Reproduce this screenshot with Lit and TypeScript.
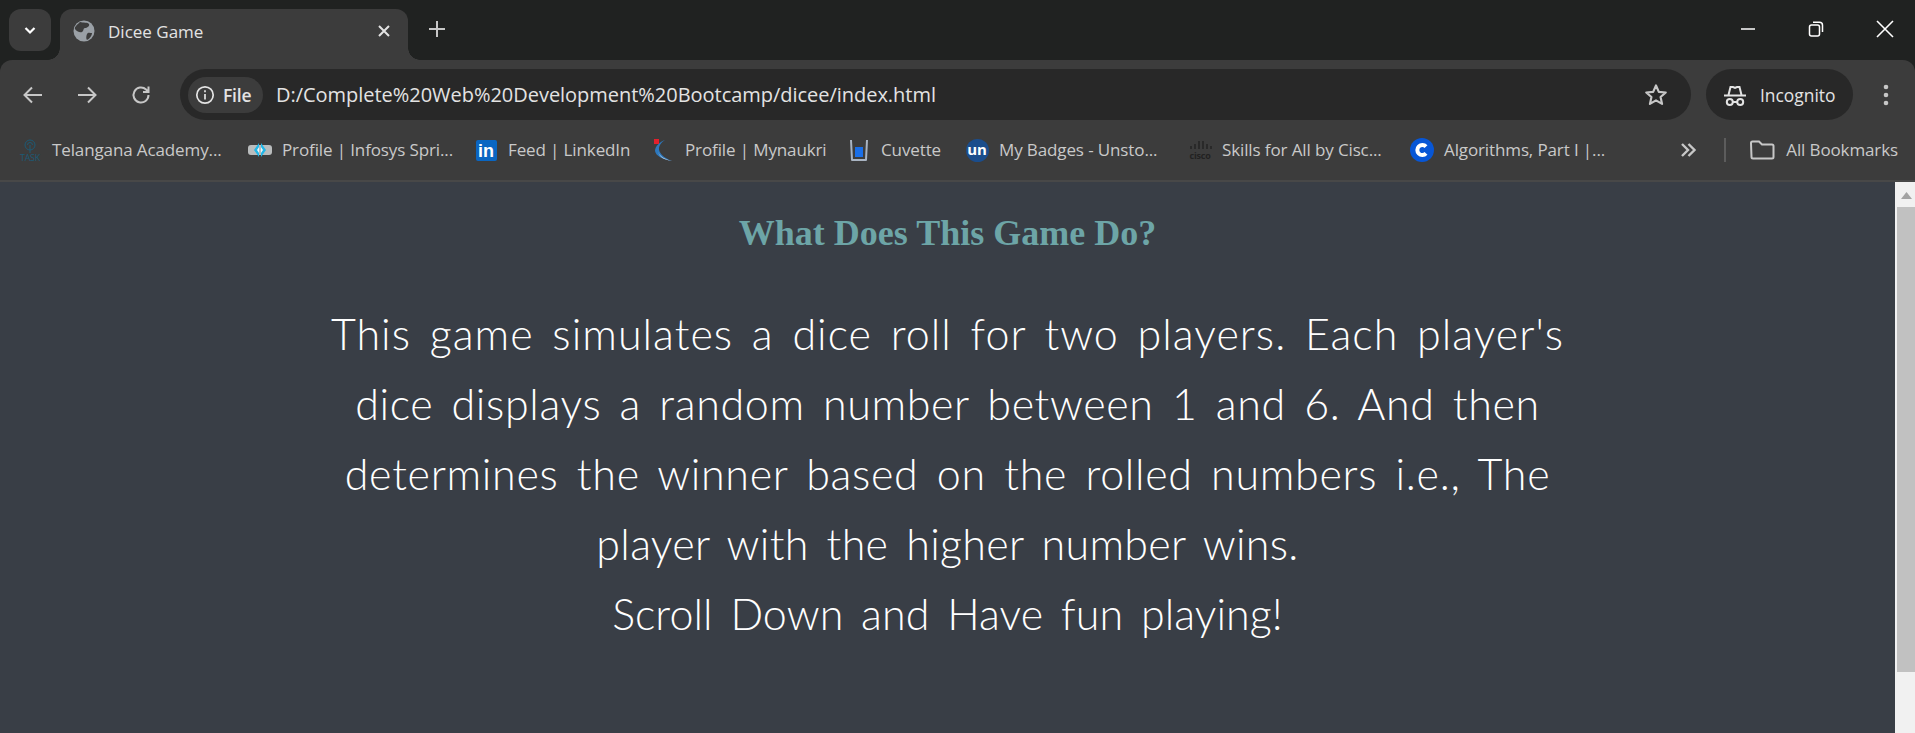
import { LitElement, css, html, svg } from 'lit';
import { customElement } from 'lit/decorators.js';

const BOOKMARKS = [
    { label: 'Telangana Academy...', slot: 248, icon: 'task' },
    { label: 'Profile | Infosys Spri...', slot: 226, icon: 'infosys' },
    { label: 'Feed | LinkedIn', slot: 177, icon: 'linkedin' },
    { label: 'Profile | Mynaukri', slot: 196, icon: 'naukri' },
    { label: 'Cuvette', slot: 118, icon: 'cuvette' },
    { label: 'My Badges - Unsto...', slot: 223, icon: 'un' },
    { label: 'Skills for All by Cisc...', slot: 222, icon: 'cisco' },
    { label: 'Algorithms, Part I |...', slot: 200, icon: 'coursera' },
];

// spacing per line, the handwriting font of the original runs wider on some lines
const LINES = [
    { text: "This game simulates a dice roll for two players. Each player's", spacing: 1.03 },
    { text: 'dice displays a random number between 1 and 6. And then', spacing: 0.63 },
    { text: 'determines the winner based on the rolled numbers i.e., The', spacing: 0.69 },
    { text: 'player with the higher number wins.', spacing: 0.3 },
    { text: 'Scroll Down and Have fun playing!', spacing: 0.08 },
];

function bookmarkIcon(name: string) {
    switch (name) {
        case 'task':
            return html`<span class="bm-icon task">
                <svg width="14" height="14" viewBox="0 0 14 14" fill="none" stroke="#1d5a75" stroke-width="1">
                    <circle cx="7" cy="6" r="5" /><path d="M7 6v8M4.5 6a2.5 2.5 0 0 1 5 0" />
                </svg>
                <span>TASK</span>
            </span>`;
        case 'infosys':
            return html`<span class="bm-icon"><svg width="24" height="20" viewBox="0 0 24 20">
                <rect x="0" y="5" width="24" height="10" rx="3" fill="#b9bcbd" />
                <path d="M11 3 6 10l5 7zM13 3l5 7-5 7z" fill="#1fb6e8" />
                <path d="M11 7 9 10l2 3zM13 7l2 3-2 3z" fill="#e8f6fb" />
            </svg></span>`;
        case 'linkedin':
            return html`<span class="bm-icon"><span class="li">in</span></span>`;
        case 'naukri':
            return html`<span class="bm-icon"><svg width="22" height="24" viewBox="0 0 22 24">
                <path d="M13 2C5 7 3 16 20 23 10 21 4 18 3 13 3 8 8 4 13 2z" fill="#2d78bd" />
                <path d="M6 13c1 5 6 8 14 10-8-1-13-4-14-10z" fill="#c9d8e6" />
                <rect x="2" y="1" width="5" height="5" fill="#e2202c" />
            </svg></span>`;
        case 'cuvette':
            return html`<span class="bm-icon"><svg width="20" height="24" viewBox="0 0 20 24">
                <path d="M2 2l1 20h14l1-20" fill="none" stroke="#a9b4c2" stroke-width="2" stroke-linejoin="round" />
                <rect x="6" y="9" width="8" height="10" fill="#1a6fe8" />
            </svg></span>`;
        case 'un':
            return html`<span class="bm-icon"><span class="un">un</span></span>`;
        case 'cisco':
            return html`<span class="bm-icon cisco">
                <svg width="23" height="10" viewBox="0 0 23 10" stroke="#222" stroke-width="1.4">
                    <path d="M2 6v3M6 4v5M10 1v8M14 1v8M18 4v5M22 6v3" />
                </svg>
                <span>cisco</span>
            </span>`;
        default:
            return html`<span class="bm-icon"><svg width="24" height="24" viewBox="0 0 24 24">
                <circle cx="12" cy="12" r="12" fill="#0756d6" />
                <path d="M16 8.6a5 5 0 1 0 0 6.8" fill="none" stroke="#fff" stroke-width="4" />
            </svg></span>`;
    }
}

const star = svg`<path d="M12 3.2l2.6 5.9 6.4.6-4.8 4.2 1.4 6.3L12 17l-5.6 3.2 1.4-6.3L3 9.7l6.4-.6z" fill="none" stroke="#c7c7c7" stroke-width="2" stroke-linejoin="round" />`;

@customElement('app-root')
export class AppRoot extends LitElement {
    static styles = css`
    :host {
        display: block;
        width: 1915px;
        height: 733px;
        overflow: hidden;
        background: #202221;
        font-family: "Open Sans", sans-serif;
    }

    svg { display: block; flex: none; }

    /* tab strip */
    .strip {
        height: 60px;
        box-sizing: border-box;
        padding: 9px 0 0 9px;
        display: flex;
        align-items: flex-start;
    }
    .tab-menu {
        width: 42px;
        height: 42px;
        border-radius: 12px;
        background: #3c3c3c;
        display: flex;
        align-items: center;
        justify-content: center;
        margin-right: 9px;
    }
    .tab {
        position: relative;
        width: 348px;
        height: 51px;
        box-sizing: border-box;
        padding: 0 16px 7px 13px;
        background: #3c3c3c;
        border-radius: 12px 12px 0 0;
        display: flex;
        align-items: center;
        color: #e3e3e3;
        font-size: 17px;
    }
    .tab::before, .tab::after {
        content: '';
        position: absolute;
        bottom: 0;
        width: 12px;
        height: 12px;
    }
    .tab::before {
        left: -12px;
        background: radial-gradient(circle at 0 0, transparent 11.5px, #3c3c3c 12px);
    }
    .tab::after {
        right: -12px;
        background: radial-gradient(circle at 100% 0, transparent 11.5px, #3c3c3c 12px);
    }
    .tab-title {
        flex: 1;
        margin-left: 13px;
    }
    .new-tab { margin: 10px 0 0 19px; }
    .window-btns {
        margin: 0 -4px 0 auto;
        display: flex;
        padding-top: 8px;
    }
    .window-btns span {
        width: 68.5px;
        height: 24px;
        display: flex;
        align-items: center;
        justify-content: center;
    }

    /* toolbar */
    .toolbar {
        height: 60px;
        box-sizing: border-box;
        padding-top: 9px;
        background: #3c3c3c;
        border-radius: 12px 12px 0 0;
        display: flex;
        align-items: stretch;
        color: #c7c7c7;
    }
    .nav {
        width: 180px;
        display: flex;
        align-items: center;
        padding-left: 21px;
        gap: 30px;
        box-sizing: border-box;
    }
    .omnibox {
        width: 1511px;
        box-sizing: border-box;
        padding: 0 22px 0 8px;
        background: #282828;
        border-radius: 26px;
        display: flex;
        align-items: center;
    }
    .chip {
        width: 75px;
        height: 36px;
        flex: none;
        box-sizing: border-box;
        padding-left: 7px;
        gap: 8px;
        background: #3c3c3c;
        border-radius: 18px;
        display: flex;
        align-items: center;
        color: #e3e3e3;
        font-size: 17.5px;
        font-weight: 600;
        letter-spacing: -0.2px;
    }
    .url {
        flex: 1;
        margin-left: 13px;
        color: #e3e3e3;
        font-size: 20px;
        letter-spacing: -0.03px;
        white-space: nowrap;
    }
    .incognito {
        width: 147px;
        margin-left: 15px;
        box-sizing: border-box;
        padding-left: 17px;
        gap: 13px;
        background: #282828;
        border-radius: 26px;
        display: flex;
        align-items: center;
        color: #e3e3e3;
        font-size: 17.4px;
    }
    .kebab { margin: auto 0 auto 30px; }

    /* bookmarks */
    .bookmarks {
        height: 62px;
        box-sizing: border-box;
        background: #3c3c3c;
        border-bottom: 2px solid #484848;
        display: flex;
        align-items: center;
        color: #c9c9c9;
        font-size: 17px;
        letter-spacing: -0.12px;
        white-space: nowrap;
    }
    .bookmark {
        display: flex;
        align-items: center;
        box-sizing: border-box;
        flex: none;
    }
    .bookmark:first-child { padding-left: 18px; }
    .bm-label { padding-bottom: 2px; }
    .bm-icon {
        width: 24px;
        height: 24px;
        margin-right: 10px;
        display: flex;
        flex-direction: column;
        align-items: center;
        justify-content: center;
        flex: none;
    }
    .task span {
        font-size: 9px;
        line-height: 9px;
        letter-spacing: -0.3px;
        color: #1d5a75;
    }
    .cisco { gap: 1px; }
    .cisco span {
        font-size: 9px;
        line-height: 9px;
        font-weight: 700;
        letter-spacing: -0.2px;
        color: #222;
    }
    .li {
        width: 21px;
        height: 21px;
        background: #0a66c2;
        border-radius: 2px;
        color: #fff;
        font-family: "Liberation Sans", sans-serif;
        font-weight: 700;
        font-size: 18px;
        line-height: 22px;
        letter-spacing: 0;
        text-align: center;
    }
    .un {
        width: 23px;
        height: 23px;
        background: #1b4d8c;
        border-radius: 50%;
        color: #fff;
        font-weight: 700;
        font-size: 15px;
        line-height: 21px;
        letter-spacing: 0;
        text-align: center;
    }
    .bm-end {
        display: flex;
        align-items: center;
        margin-left: auto;
        color: #c9c9c9;
    }
    .sep {
        width: 2px;
        height: 24px;
        margin: 0 23px 0 26px;
        background: #5c5c5c;
    }
    .folder { margin-right: 11px; }
    .all { margin-right: 17px; }

    /* page */
    .page {
        height: 551px;
        display: flex;
        background: #393e46;
    }
    .content {
        flex: 1;
        text-align: center;
        overflow: hidden;
    }
    h2 {
        margin: 31px 0 0;
        font-family: "Liberation Serif", serif;
        font-weight: 700;
        font-size: 36px;
        line-height: 40px;
        color: #6da5a7;
    }
    p {
        margin: 46px 0 0;
        font-family: Lato, sans-serif;
        font-weight: 300;
        font-size: 43px;
        line-height: 70px;
        word-spacing: 6px;
        color: #fff;
    }
    p span { display: block; }
    .scrollbar {
        width: 20px;
        background: #f1f1f1;
        display: flex;
        flex-direction: column;
    }
    .arrow { margin: 10px 0 8px 6px; }
    .thumb {
        width: 18px;
        height: 465px;
        margin-left: 2px;
        background: #c1c1c1;
    }
    `;

    render() {
        return html`
        <div class="strip">
            <div class="tab-menu">
                <svg width="16" height="16" viewBox="0 0 16 16" fill="none" stroke="#fff" stroke-width="2.2"><path d="M3.5 6 8 10.5 12.5 6" /></svg>
            </div>
            <div class="tab">
                <svg width="22" height="22" viewBox="0 0 22 22">
                    <circle cx="11" cy="11" r="10.5" fill="#9aa0a6" />
                    <path d="M7 2c3 1 8 0 9 2s-2 4-4 4-1 3-3 4-6-1-7-3 3-5 5-7zM19 13c-2 0-4-1-5 1s-1 5 0 6c2-1 5-4 5-7z" fill="#3c3c3c" />
                </svg>
                <span class="tab-title">Dicee Game</span>
                <svg width="16" height="16" viewBox="0 0 16 16" stroke="#e3e3e3" stroke-width="2"><path d="M3 3l10 10M13 3 3 13" /></svg>
            </div>
            <svg class="new-tab" width="20" height="20" viewBox="0 0 20 20" stroke="#c7c7c7" stroke-width="2"><path d="M10 2v16M2 10h16" /></svg>
            <div class="window-btns">
                <span><svg width="16" height="16" viewBox="0 0 16 16" stroke="#fff" stroke-width="1.5"><path d="M1 8h14" /></svg></span>
                <span><svg width="16" height="18" viewBox="0 0 16 18" fill="none" stroke="#fff" stroke-width="1.5">
                    <rect x="1.5" y="5" width="10" height="11" rx="2" /><path d="M5 2.2h6.5a3 3 0 0 1 3 3V12" />
                </svg></span>
                <span><svg width="18" height="18" viewBox="0 0 18 18" stroke="#fff" stroke-width="1.6"><path d="M1 1l16 16M17 1 1 17" /></svg></span>
            </div>
        </div>

        <div class="toolbar">
            <div class="nav">
                <svg width="24" height="24" viewBox="0 0 24 24" fill="none" stroke="#c7c7c7" stroke-width="2"><path d="M21 12H4M11 4.5 3.5 12l7.5 7.5" /></svg>
                <svg width="24" height="24" viewBox="0 0 24 24" fill="none" stroke="#c7c7c7" stroke-width="2"><path d="M3 12h17M13 4.5l7.5 7.5-7.5 7.5" /></svg>
                <svg width="24" height="24" viewBox="0 0 24 24" fill="none" stroke="#c7c7c7" stroke-width="2"><path d="M19.5 12a7.5 7.5 0 1 1-2.4-5.5L19.5 9M19.5 3.5V9H14" /></svg>
            </div>
            <div class="omnibox">
                <div class="chip">
                    <svg width="20" height="20" viewBox="0 0 20 20" fill="none" stroke="#e3e3e3" stroke-width="1.7"><circle cx="10" cy="10" r="8.2" /><path d="M10 9v5.5M10 5.2v2" /></svg>
                    <span>File</span>
                </div>
                <span class="url">D:/Complete%20Web%20Development%20Bootcamp/dicee/index.html</span>
                <svg width="26" height="26" viewBox="0 0 24 24">${star}</svg>
            </div>
            <div class="incognito">
                <svg width="24" height="24" viewBox="0 0 24 24" fill="none" stroke="#e3e3e3" stroke-width="2">
                    <path d="M1 12.5h22M5.5 12l2-8h2.5l2 1 2-1h2.5l2 8" />
                    <circle cx="6.8" cy="19" r="3" /><circle cx="17.2" cy="19" r="3" /><path d="M9.8 19h4.4" />
                </svg>
                <span>Incognito</span>
            </div>
            <svg class="kebab" width="6" height="24" viewBox="0 0 6 24" fill="#c7c7c7"><circle cx="3" cy="4" r="2.3" /><circle cx="3" cy="12" r="2.3" /><circle cx="3" cy="20" r="2.3" /></svg>
        </div>

        <div class="bookmarks">
            ${BOOKMARKS.map((b) => html`<div class="bookmark" style="width:${b.slot}px">
                ${bookmarkIcon(b.icon)}<span class="bm-label">${b.label}</span>
            </div>`)}
            <div class="bm-end">
                <svg width="20" height="20" viewBox="0 0 20 20" fill="none" stroke="#c7c7c7" stroke-width="2.4"><path d="M4 4l6 6-6 6M10.5 4l6 6-6 6" /></svg>
                <span class="sep"></span>
                <svg class="folder" width="26" height="24" viewBox="0 0 26 24" fill="none" stroke="#c7c7c7" stroke-width="2"><path d="M2 5a1.5 1.5 0 0 1 1.5-1.5h6.5l3 3h10a1.5 1.5 0 0 1 1.5 1.5v11a1.5 1.5 0 0 1-1.5 1.5h-19a1.5 1.5 0 0 1-1.5-1.5z" /></svg>
                <span class="all bm-label">All Bookmarks</span>
            </div>
        </div>

        <div class="page">
            <div class="content">
                <h2>What Does This Game Do?</h2>
                <p>${LINES.map((l) => html`<span style="letter-spacing:${l.spacing}px">${l.text}</span>`)}</p>
            </div>
            <div class="scrollbar">
                <svg class="arrow" width="11" height="7" viewBox="0 0 11 7" fill="#a3a3a3"><path d="M5.5 0 11 7H0z" /></svg>
                <div class="thumb"></div>
            </div>
        </div>
        `;
    }
}
